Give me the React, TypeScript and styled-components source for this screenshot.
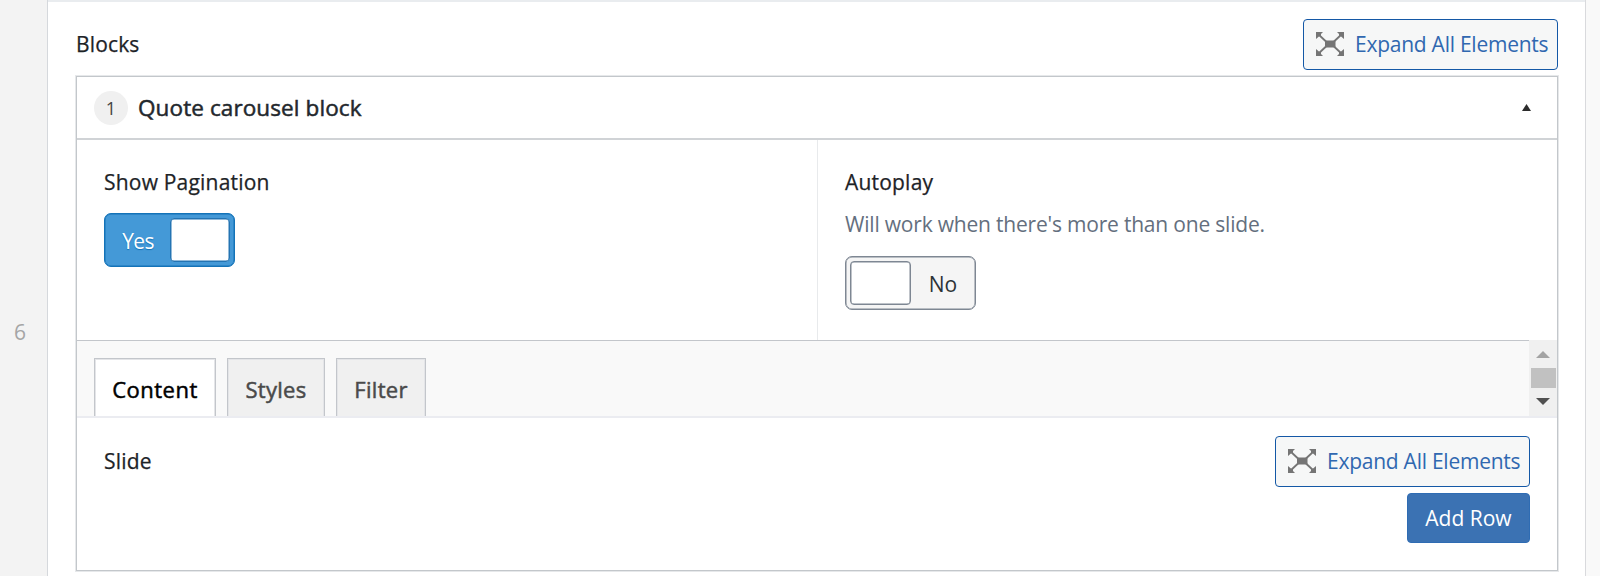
import React from "react";
import styled, { createGlobalStyle } from "styled-components";

const GlobalStyle = createGlobalStyle`
  *, *::before, *::after { box-sizing: border-box; }
  body {
    margin: 0;
    overflow: hidden;
    background: #fff;
    color: #1d2327;
    font-family: "Open Sans", "Noto Sans", sans-serif;
    font-size: 21px;
    line-height: 28px;
  }
`;

const Row = styled.div`
  display: flex;
  width: 1600px;
  height: 576px;
`;

const Gutter = styled.div`
  display: flex;
  flex: none;
  align-items: center;
  width: 48px;
  padding: 87px 0 0 14px;
  background: #f3f3f3;
  border-right: 1px solid #d5d8dc;
  color: #a5a5a5;
`;

const Main = styled.main`
  flex: 1;
  padding: 17px 27px 0 28px;
  border-top: 2px solid #e9ecef;
`;

const EndGutter = styled.div`
  flex: none;
  width: 15px;
  background: #f9f9f9;
  border-left: 1px solid #d9dadd;
`;

const FieldHead = styled.div`
  display: flex;
  justify-content: space-between;
  align-items: flex-start;
`;

const Text = styled.span<{ $track?: number }>`
  white-space: nowrap;
  letter-spacing: ${(p) => p.$track ?? 0}px;
`;

const Label = styled(Text)`
  display: block;
  -webkit-text-stroke: 0.25px currentColor;
`;

const BlocksLabel = styled(Label)`
  margin-top: 11px;
`;

const ExpandButton = styled.button`
  display: flex;
  align-items: center;
  gap: 11px;
  width: 255px;
  height: 51px;
  padding: 0 0 1px 12px;
  border: 1px solid #1458a6;
  border-radius: 4px;
  background: #f6f7f7;
  color: #3068b0;
  font: inherit;
`;

const Layout = styled.section`
  width: 1482px;
  height: 495px;
  margin-top: 6px;
  border: 1px solid #c3c7cb;
  box-shadow: 0 0 0 1px #e6e8ea;
`;

const LayoutHead = styled.header`
  display: flex;
  align-items: center;
  height: 63px;
  padding: 0 26px 0 17px;
  border-bottom: 2px solid #d0d3d6;
`;

const Order = styled.span`
  display: grid;
  place-items: center;
  width: 34px;
  height: 34px;
  margin-right: 10px;
  padding-top: 1px;
  border-radius: 50%;
  background: #f0f0f0;
  color: #444;
  font-size: 18px;
`;

const Title = styled(Text)`
  flex: 1;
  color: #23282d;
  font-size: 22.5px;
  -webkit-text-stroke: 0.5px currentColor;
`;

const Fields = styled.div`
  display: grid;
  grid-template-columns: 740px 1fr;
  height: 200px;
`;

const Field = styled.div`
  padding: 28px 27px 0 27px;
  & + & {
    border-left: 1px solid #e8eaec;
  }
`;

const Hint = styled(Text)`
  display: block;
  margin-top: 14px;
  color: #646f7e;
`;

const Toggle = styled.div<{ $on?: boolean }>`
  display: flex;
  flex-direction: ${(p) => (p.$on ? "row-reverse" : "row")};
  align-items: center;
  width: 131px;
  height: 54px;
  margin-top: ${(p) => (p.$on ? 17 : 18)}px;
  padding: 4px;
  border: 1px solid ${(p) => (p.$on ? "#1473b8" : "#7e8793")};
  border-radius: 7px;
  background: ${(p) => (p.$on ? "#4499d7" : "#f5f5f5")};
  box-shadow: inset 0 0 0 0.5px ${(p) => (p.$on ? "#1473b8" : "#7e8793")};
  color: ${(p) => (p.$on ? "#fff" : "#2c3338")};
  text-shadow: ${(p) => (p.$on ? "0 1px 1px #1473b8" : "none")};
`;

const Knob = styled.span<{ $on?: boolean }>`
  width: ${(p) => (p.$on ? 60 : 61)}px;
  height: 44px;
  border: 1px solid ${(p) => (p.$on ? "#2474b3" : "#7e8793")};
  border-radius: 4px;
  background: #fff;
  box-shadow: inset 0 0 0 0.5px ${(p) => (p.$on ? "#2474b3" : "#7e8793")};
`;

const ToggleText = styled(Text)<{ $shift: number }>`
  flex: 1;
  padding: 2px 0 0;
  text-align: center;
  text-indent: ${(p) => p.$shift}px;
`;

const TabBar = styled.nav`
  display: flex;
  height: 78px;
  border-top: 1px solid #c3c6cb;
  border-bottom: 2px solid #ebecf1;
  background: #f9f9f9;
`;

const Tabs = styled.div`
  display: flex;
  flex: 1;
  gap: 11px;
  padding: 17px 0 0 17px;
`;

const Tab = styled.button<{ $active?: boolean; $width: number }>`
  width: ${(p) => p.$width}px;
  padding: 2px 0 0;
  border: 1px solid #c3c6cb;
  border-bottom: 0;
  background: ${(p) => (p.$active ? "#fff" : "#f0f0f0")};
  box-shadow: inset 1px 1px #e4e5e8, inset -1px 0 #e4e5e8;
  color: ${(p) => (p.$active ? "#000" : "#4a4a4a")};
  font: inherit;
  font-size: 22px;
  -webkit-text-stroke: 0.5px currentColor;
`;

const ScrollBar = styled.div`
  display: flex;
  flex-direction: column;
  align-items: center;
  width: 28px;
  margin-top: -1px;
  padding-top: 11px;
  background: #f0f0f0;
`;

const Thumb = styled.div`
  width: 25px;
  height: 20px;
  margin: 10px 0;
  background: #c1c1c1;
`;

const SlideField = styled.div`
  display: flex;
  justify-content: space-between;
  padding: 18px 27px 0 27px;
`;

const SlideLabel = styled(Label)`
  margin-top: 11px;
`;

const Actions = styled.div`
  display: flex;
  flex-direction: column;
  align-items: flex-end;
  gap: 6px;
`;

const AddButton = styled.button`
  width: 123px;
  height: 50px;
  padding: 0;
  border: 1px solid #2f6cb3;
  border-radius: 4px;
  background: #3b72b3;
  color: #fff;
  font: inherit;
`;

const ExpandIcon = () => (
  <svg width="28" height="24" viewBox="0 0 28 24" fill="#757575" stroke="#757575">
    <rect x="9" y="8.5" width="10.5" height="7" stroke="none" />
    <path stroke="none" d="M0 0h7L5 2v3L3.500 4 0 7zM28 0h-7l2 2v3l1.500-1L28 7zM0 24h7l-2-2v-3l-1.500 1L0 17zM28 24h-7l2-2v-3l1.500 1 3.500-3z" />
    <path strokeWidth="1.8" d="M2 2l8 7.500M26 2l-8 7.500M2 22l8-7.500M26 22l-8-7.500" />
  </svg>
);

const Expand = () => (
  <ExpandButton>
    <ExpandIcon />
    <Text $track={-0.25}>Expand All Elements</Text>
  </ExpandButton>
);

const Triangle = ({ down, w = 14, h = 7, fill }: { down?: boolean; w?: number; h?: number; fill: string }) => (
  <svg width={w} height={h} viewBox="0 0 14 7" preserveAspectRatio="none" fill={fill}>
    <path d={down ? "M0 0h14L7 7z" : "M0 7h14L7 0z"} />
  </svg>
);

export default function App() {
  return (
    <>
      <GlobalStyle />
      <Row>
        <Gutter>6</Gutter>
        <Main>
          <FieldHead>
            <BlocksLabel $track={0.15}>Blocks</BlocksLabel>
            <Expand />
          </FieldHead>
          <Layout>
            <LayoutHead>
              <Order>1</Order>
              <Title $track={0.1}>Quote carousel block</Title>
              <Triangle w={9} h={7} fill="#2c2c2c" />
            </LayoutHead>
            <Fields>
              <Field>
                <Label $track={0.2}>Show Pagination</Label>
                <Toggle $on>
                  <Knob $on />
                  <ToggleText $shift={-3} $track={-0.6}>Yes</ToggleText>
                </Toggle>
              </Field>
              <Field>
                <Label $track={0.2}>Autoplay</Label>
                <Hint $track={-0.2}>Will work when there's more than one slide.</Hint>
                <Toggle>
                  <Knob />
                  <ToggleText $shift={4}>No</ToggleText>
                </Toggle>
              </Field>
            </Fields>
            <TabBar>
              <Tabs>
                <Tab $active $width={122}><Text $track={0.5}>Content</Text></Tab>
                <Tab $width={98}><Text $track={0.3}>Styles</Text></Tab>
                <Tab $width={90}><Text $track={0.3}>Filter</Text></Tab>
              </Tabs>
              <ScrollBar>
                <Triangle fill="#a3a3a3" />
                <Thumb />
                <Triangle down fill="#505050" />
              </ScrollBar>
            </TabBar>
            <SlideField>
              <SlideLabel $track={0.2}>Slide</SlideLabel>
              <Actions>
                <Expand />
                <AddButton><Text>Add Row</Text></AddButton>
              </Actions>
            </SlideField>
          </Layout>
        </Main>
        <EndGutter />
      </Row>
    </>
  );
}
